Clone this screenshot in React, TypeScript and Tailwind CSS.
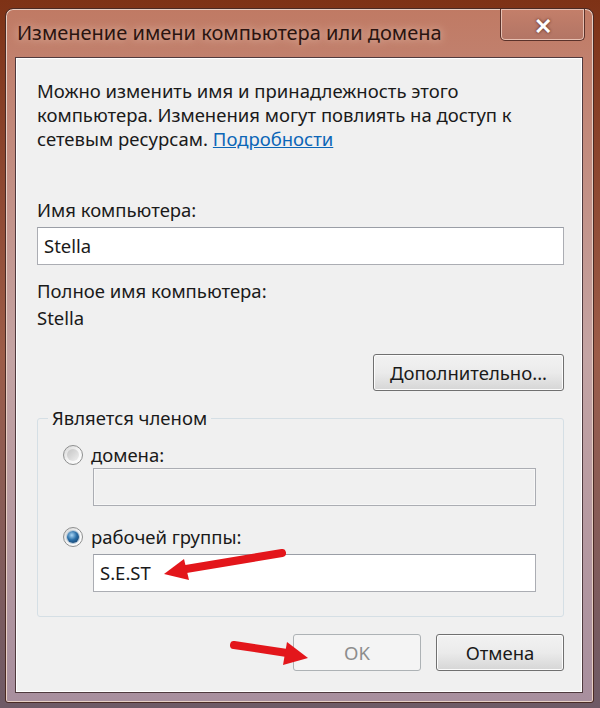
import React from "react";

function Radio({ checked }: { checked?: boolean }) {
  return (
    <span className="flex h-[20px] w-[20px] shrink-0 items-center justify-center rounded-full border border-[#8e8f8f] bg-gradient-to-br from-[#d6d6d6] via-[#f4f4f4] to-[#ffffff]">
      {checked ? (
        <span className="h-[12px] w-[12px] rounded-full bg-[radial-gradient(circle_at_40%_35%,#a9d6f5_0%,#2a6fa8_45%,#0d2f57_100%)] shadow-[0_0_0_1px_#b6c9d8]" />
      ) : (
        <span className="h-[12px] w-[12px] rounded-full bg-gradient-to-br from-[#c4c4c4] to-[#efefef]" />
      )}
    </span>
  );
}

function Arrow({ d, head }: { d: string; head: string }) {
  return (
    <>
      <path d={d} stroke="#e3161b" strokeWidth="8" strokeLinecap="round" fill="none" />
      <polygon points={head} fill="#e3161b" />
    </>
  );
}

export default function App() {
  return (
    <div
      className="relative h-[708px] w-[600px] overflow-hidden bg-gradient-to-b from-[#7e3216] via-[#9c5c48] to-[#6e5a66] pt-[8px] pl-[5px] pr-[6px] pb-[5px] text-[#1a1a1a]"
      style={{ fontFamily: '"Noto Sans", "Open Sans", sans-serif' }}
    >
      <div className="flex h-full flex-col rounded-t-[8px] rounded-b-[3px] border border-[#4a2a24] bg-gradient-to-b from-[#c07a64] via-[#c4a4a4] to-[#a88f9e] shadow-[inset_0_0_0_1px_#e8cfc4]">
        {/* title bar */}
        <div className="flex h-[48px] shrink-0 items-start justify-between pl-[11px] pr-[8px]">
          <span className="mt-[11px] text-[20px] leading-[26px] text-[#2a1410] [text-shadow:0_0_8px_#e9c8b6]">
            Изменение имени компьютера или домена
          </span>
          <div className="flex h-[32px] w-[85px] items-center justify-center rounded-b-[5px] border border-t-0 border-[#5a322a] bg-gradient-to-b from-[#c47f6a] to-[#b27565] shadow-[inset_0_0_0_1px_#e7c0b2]">
            <span className="text-[22px] font-bold leading-none text-white [text-shadow:0_0_3px_#4a2018]">✕</span>
          </div>
        </div>

        {/* client area */}
        <div className="mb-[9px] ml-[9px] mr-[10px] flex flex-1 flex-col border border-[#4f3a3e] bg-[#f0f0f0] pl-[21px] pr-[18px] pt-[21px] text-[18.5px] leading-[24px] shadow-[inset_0_0_0_1px_#ffffff]">
          <p>Можно изменить имя и принадлежность этого</p>
          <p>компьютера. Изменения могут повлиять на доступ к</p>
          <p className="flex gap-[5px]">
            <span>сетевым ресурсам.</span>
            <span className="text-[#0c66b7] underline">Подробности</span>
          </p>

          <p className="mt-[47px]">Имя компьютера:</p>
          <div className="mt-[5px] flex h-[38px] items-center border border-[#abadb3] border-t-[#9a9ea6] bg-white px-[6px]">
            Stella
          </div>

          <p className="mt-[14px]">Полное имя компьютера:</p>
          <p className="mt-[3px]">Stella</p>

          <div className="mt-[24px] flex justify-end">
            <button className="flex h-[37px] w-[191px] items-center justify-center rounded-[3px] border border-[#707070] bg-gradient-to-b from-[#f2f2f2] via-[#ebebeb] to-[#d6d6d6] shadow-[inset_0_0_0_1px_#fcfcfc]">
              Дополнительно...
            </button>
          </div>

          <fieldset className="mt-[15px] h-[211px] rounded-[3px] border border-[#d5dfe5] px-[10px]">
            <legend className="px-[4px]">Является членом</legend>
            <div className="pl-[15px] pr-[17px]">
              <div className="mt-[13px] flex h-[24px] items-center gap-[8px]">
                <Radio />
                <span>домена:</span>
              </div>
              <div className="ml-[30px] mt-[1px] h-[38px] border border-[#abadb3] bg-[#f0f0f0] shadow-[inset_0_0_0_1px_#f7f7f7]" />
              <div className="mt-[19px] flex h-[24px] items-center gap-[8px]">
                <Radio checked />
                <span>рабочей группы:</span>
              </div>
              <div className="ml-[30px] mt-[5px] flex h-[38px] items-center border border-[#abadb3] border-t-[#9a9ea6] bg-white px-[6px]">
                S.E.ST
              </div>
            </div>
          </fieldset>

          <div className="mt-[17px] flex justify-end gap-[15px]">
            <button className="flex h-[37px] w-[128px] items-center justify-center rounded-[3px] border border-[#adb2b5] bg-[#f4f4f4] text-[#8d8d8d]">
              OK
            </button>
            <button className="flex h-[37px] w-[128px] items-center justify-center rounded-[3px] border border-[#707070] bg-gradient-to-b from-[#f2f2f2] via-[#ebebeb] to-[#d6d6d6] shadow-[inset_0_0_0_1px_#fcfcfc]">
              Отмена
            </button>
          </div>
        </div>
      </div>

      {/* red annotation arrows */}
      <svg className="pointer-events-none absolute left-0 top-0" width="600" height="708">
        <Arrow d="M282 553 L186 569" head="164,574 184,559 189,580" />
        <Arrow d="M234 645 L287 653" head="308,658 287,642 283,665" />
      </svg>
    </div>
  );
}
